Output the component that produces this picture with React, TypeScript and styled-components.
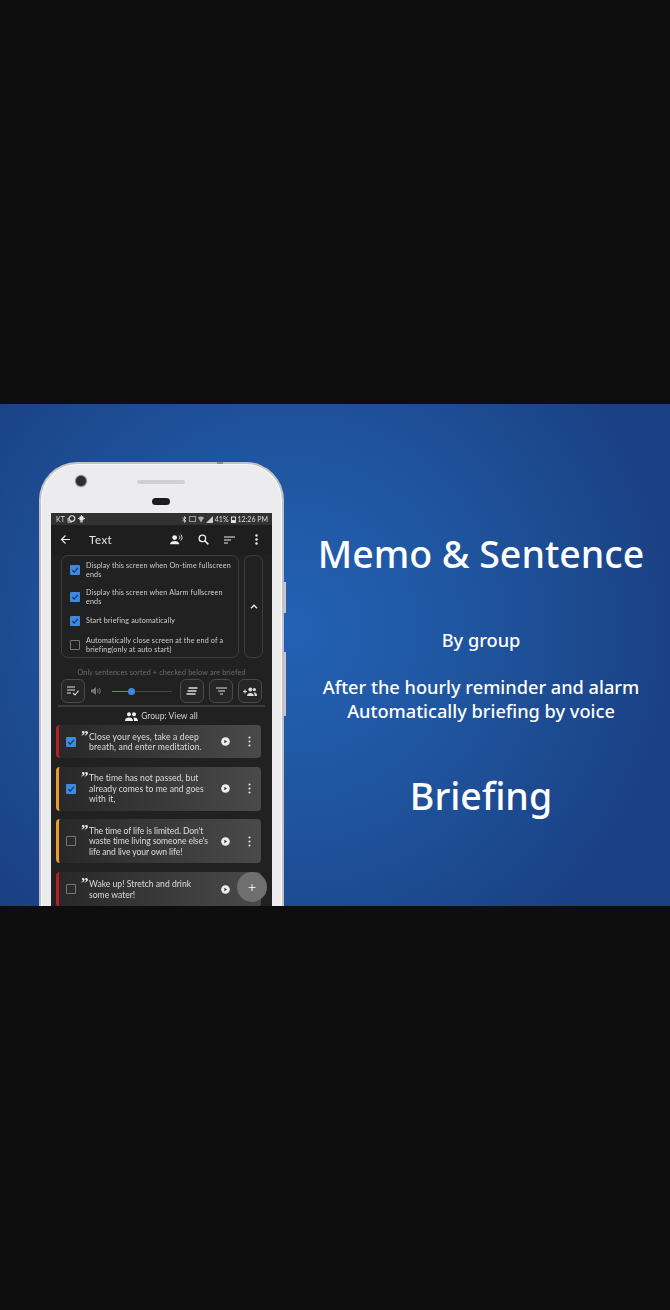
import styled, { createGlobalStyle } from "styled-components";

const GlobalStyle = createGlobalStyle`
  html, body {
    margin: 0;
    padding: 0;
    background: #0e0e0e;
  }
`;

const sentences = [
  { id: 1, bar: "#b3201f", checked: true, tracking: 0.12, lines: ["Close your eyes, take a deep", "breath, and enter meditation."], height: 33 },
  { id: 2, bar: "#ef9a2e", checked: true, tracking: 0.05, lines: ["The time has not passed, but", "already comes to me and goes", "with it,"], height: 44 },
  { id: 3, bar: "#ef9a2e", checked: false, tracking: -0.1, lines: ["The time of life is limited. Don't", "waste time living someone else's", "life and live your own life!"], height: 44 },
  { id: 4, bar: "#b3201f", checked: false, tracking: 0, lines: ["Wake up! Stretch and drink", "some water!"], height: 35 },
];

const options = [
  { id: 1, checked: true, text: "Display this screen when On-time fullscreen ends" },
  { id: 2, checked: true, text: "Display this screen when Alarm fullscreen ends" },
  { id: 3, checked: true, text: "Start briefing automatically" },
  { id: 4, checked: false, text: "Automatically close screen at the end of a briefing(only at auto start)" },
];

const Check = ({ on }: { on: boolean }) => (
  <CheckBox $on={on}>
    {on && (
      <svg width="8" height="8" viewBox="0 0 10 10">
        <path d="M1.5 5.2 4 7.6 8.6 2.4" fill="none" stroke="#16365c" strokeWidth="1.6" />
      </svg>
    )}
  </CheckBox>
);

const App = () => {
  return (
    <Page>
      <GlobalStyle />
      <Banner>
        <Phone>
          <TopMark />
          <SideKey $top={118} $height={31} />
          <SideKey $top={188} $height={64} />
          <Bezel>
            <Camera />
            <Speaker />
            <Sensor />
          </Bezel>
          <Screen>
            <StatusBar>
              <span>KT</span>
              <svg width="9" height="8" viewBox="0 0 9 8">
                <circle cx="5" cy="3.6" r="2.800" fill="none" stroke="#ddd" strokeWidth="1.1" />
                <path d="M.5 7h4.500M1 3v3" stroke="#ddd" />
              </svg>
              <svg width="7" height="8" viewBox="0 0 7 8">
                <circle cx="3.500" cy="3.500" r="2.400" fill="#e4e4e4" />
                <path d="M2 6.800h3M3.500 0v1M0 3.500h1M6 3.500h1" stroke="#e4e4e4" />
              </svg>
              <StatusRight>
                <svg width="5" height="7" viewBox="0 0 5 7">
                  <path d="M.5 2 4 5 2.400 6.500V.5L4 2 .5 5" fill="none" stroke="#ddd" strokeWidth=".8" />
                </svg>
                <svg width="7" height="6" viewBox="0 0 7 6">
                  <rect x=".5" y=".5" width="6" height="5" fill="none" stroke="#999" />
                </svg>
                <svg width="6" height="7" viewBox="0 0 6 7">
                  <path d="M0 1.500C2 0 4 0 6 1.500L3 6.500Z" fill="#aaa" />
                </svg>
                <svg width="7" height="7" viewBox="0 0 7 7">
                  <path d="M0 7 7 0V7Z" fill="#ccc" />
                </svg>
                <span>41%</span>
                <svg width="5" height="7" viewBox="0 0 5 7">
                  <rect x=".5" y="1" width="4" height="5.500" fill="none" stroke="#ddd" />
                  <rect x="1" y="4" width="3" height="2" fill="#ddd" />
                </svg>
                <span>12:26 PM</span>
              </StatusRight>
            </StatusBar>
            <AppBar>
              <svg width="11" height="11" viewBox="0 0 12 12">
                <path d="M11 6H2M6 1.600 1.600 6 6 10.400" fill="none" stroke="#eee" strokeWidth="1.300" />
              </svg>
              <AppTitle>Text</AppTitle>
              <AppActions>
                <svg width="13" height="11" viewBox="0 0 14 11">
                  <circle cx="5" cy="3.400" r="2.600" fill="#eee" />
                  <path d="M0 10.600c0-2.400 2.400-3.600 5-3.600s5 1.200 5 3.600Z" fill="#eee" />
                  <path d="M9.800 1.400c1 1 1 2.800 0 3.800M11.600 .2c1.800 1.800 1.800 4.600 0 6.400" fill="none" stroke="#eee" />
                </svg>
                <svg width="11" height="11" viewBox="0 0 11 11">
                  <circle cx="4.400" cy="4.400" r="3.200" fill="none" stroke="#eee" strokeWidth="1.300" />
                  <path d="M6.800 6.800 10.400 10.400" stroke="#eee" strokeWidth="1.500" />
                </svg>
                <svg width="11" height="8" viewBox="0 0 11 8">
                  <path d="M0 1h11M0 4h7M0 7h4" stroke="#eee" strokeWidth="1.100" />
                </svg>
                <DotsIcon width="3" height="11" viewBox="0 0 3 11">
                  <circle cx="1.500" cy="1.500" r="1.200" fill="#eee" />
                  <circle cx="1.500" cy="5.500" r="1.200" fill="#eee" />
                  <circle cx="1.500" cy="9.500" r="1.200" fill="#eee" />
                </DotsIcon>
              </AppActions>
            </AppBar>
            <OptionsRow>
              <OptionsPanel>
                {options.map((o) => (
                  <OptionRow key={o.id}>
                    <Check on={o.checked} />
                    <OptionText>{o.text}</OptionText>
                  </OptionRow>
                ))}
              </OptionsPanel>
              <CollapsePanel>
                <svg width="8" height="5" viewBox="0 0 8 5">
                  <path d="M1 4.200 4 1.200 7 4.200" fill="none" stroke="#eee" strokeWidth="1.300" />
                </svg>
              </CollapsePanel>
            </OptionsRow>
            <Hint>Only sentences sorted + checked below are briefed</Hint>
            <ToolRow>
              <ToolButton>
                <svg width="12" height="10" viewBox="0 0 12 10">
                  <path d="M0 1h8M0 4h8M0 7h4" stroke="#ddd" strokeWidth="1.100" />
                  <path d="M6 7 8 9 11.600 4.600" fill="none" stroke="#ddd" strokeWidth="1.100" />
                </svg>
              </ToolButton>
              <VolumeIcon width="10" height="10" viewBox="0 0 10 10">
                <path d="M0 3.400h2L5 1v8L2 6.600H0Z" fill="#777" />
                <path d="M6.400 3c.9 1 .9 3 0 4M8 1.800c1.600 1.800 1.600 4.600 0 6.400" fill="none" stroke="#777" />
              </VolumeIcon>
              <Slider>
                <SliderFill />
                <SliderKnob />
              </Slider>
              <ToolButton>
                <svg width="12" height="8" viewBox="0 0 12 8">
                  <path d="M2.500 1H11.500M1.500 4H10.500M.5 7H9.500" stroke="#ddd" strokeWidth="1.300" />
                </svg>
              </ToolButton>
              <ToolButton>
                <svg width="11" height="8" viewBox="0 0 11 8">
                  <path d="M0 1h11M2 4h7M4 7h3" stroke="#ddd" strokeWidth="1.100" />
                </svg>
              </ToolButton>
              <ToolButton>
                <svg width="14" height="9" viewBox="0 0 14 9">
                  <path d="M0 4.500h4M2 2.500v4" stroke="#ddd" strokeWidth="1.100" />
                  <circle cx="7.400" cy="2.400" r="2" fill="#ddd" />
                  <circle cx="11.400" cy="2.600" r="1.600" fill="#ddd" />
                  <path d="M4 9c0-2 1.600-3 3.400-3s3.400 1 3.400 3ZM11.400 5.400c1.400 0 2.600.8 2.600 3.600h-2.400c0-1.600-.4-2.800-1-3.400Z" fill="#ddd" />
                </svg>
              </ToolButton>
            </ToolRow>
            <Divider />
            <GroupRow>
              <svg width="13" height="9" viewBox="0 0 13 9">
                <circle cx="4" cy="2.200" r="2" fill="#eee" />
                <circle cx="9" cy="2.200" r="2" fill="#eee" />
                <path d="M0 9c0-2.400 2-3.400 4-3.400S8 6.600 8 9ZM8.600 5.600c2.200-.2 4.400.8 4.400 3.400H9c0-1.400-.2-2.400-.4-3.400Z" fill="#eee" />
              </svg>
              Group: View all
            </GroupRow>
            <CardList>
              {sentences.map((s) => (
                <Card key={s.id} $bar={s.bar} $height={s.height}>
                  <Check on={s.checked} />
                  <CardBody>
                    <QuoteMark>”</QuoteMark>
                    <CardText $tracking={s.tracking}>
                      {s.lines.map((line) => (
                        <div key={line}>{line}</div>
                      ))}
                    </CardText>
                  </CardBody>
                  <PlayIcon width="9" height="9" viewBox="0 0 9 9">
                    <circle cx="4.500" cy="4.500" r="4.300" fill="#eee" />
                    <path d="M3.400 2.700 6 4.500 3.400 6.300Z" fill="#333" />
                  </PlayIcon>
                  <MoreIcon width="3" height="11" viewBox="0 0 3 11">
                    <circle cx="1.500" cy="1.500" r="1.100" fill="#ddd" />
                    <circle cx="1.500" cy="5.500" r="1.100" fill="#ddd" />
                    <circle cx="1.500" cy="9.500" r="1.100" fill="#ddd" />
                  </MoreIcon>
                </Card>
              ))}
            </CardList>
            <Fab>+</Fab>
          </Screen>
        </Phone>
        <Copy>
          <Headline>Memo &amp; Sentence</Headline>
          <Caption $top={50}>By group</Caption>
          <Caption $top={23}>
            After the hourly reminder and alarm
            <br />
            Automatically briefing by voice
          </Caption>
          <Headline $top={49}>Briefing</Headline>
        </Copy>
      </Banner>
    </Page>
  );
};
export default App;

const Page = styled.div`
  width: 670px;
  height: 1310px;
  padding-top: 404px;
  box-sizing: border-box;
  background: #0e0e0e;
  overflow: hidden;
`;
const Banner = styled.div`
  height: 502px;
  display: flex;
  overflow: hidden;
  background: radial-gradient(ellipse 400px 400px at 290px 225px, #2361b5 0%, #1f559f 45%, #1a3f83 100%);
`;
const Phone = styled.div`
  width: 245px;
  height: 520px;
  margin: 58px 0 0 39px;
  flex-shrink: 0;
  box-sizing: border-box;
  padding: 0 10px;
  background: #ececee;
  border: 2px solid #c4c1c6;
  border-bottom: 0;
  border-radius: 38px 38px 0 0;
  box-shadow: inset 0 0 0 1px #f8f8f8;
  position: relative;
`;
const TopMark = styled.div`
  position: absolute;
  left: 176px;
  top: -2px;
  width: 6px;
  height: 2px;
  background: #8d8b8f;
`;
const SideKey = styled.div<{ $top: number; $height: number }>`
  position: absolute;
  right: -4px;
  top: ${(p) => p.$top}px;
  width: 2px;
  height: ${(p) => p.$height}px;
  background: #c9c6ca;
`;
const Bezel = styled.div`
  height: 49px;
  position: relative;
`;
const Camera = styled.div`
  position: absolute;
  left: 25px;
  top: 12px;
  width: 10px;
  height: 10px;
  border-radius: 50%;
  background: #2e2e30;
  box-shadow: 0 0 1px 1px #77777a;
`;
const Speaker = styled.div`
  position: absolute;
  left: 86px;
  top: 16px;
  width: 48px;
  height: 4px;
  border-radius: 2px;
  background: #cfcfd2;
`;
const Sensor = styled.div`
  position: absolute;
  left: 101px;
  top: 34px;
  width: 18px;
  height: 7px;
  border-radius: 4px;
  background: #1c1c1e;
`;
const Screen = styled.div`
  width: 221px;
  height: 393px;
  background: #212121;
  position: relative;
  overflow: hidden;
  font-family: Lato, "Noto Sans", sans-serif;
  color: #d8d8d8;
  filter: blur(0.3px);
`;
const StatusBar = styled.div`
  height: 12px;
  padding: 0 4px 0 5px;
  display: flex;
  align-items: center;
  gap: 2px;
  background: #323232;
  font-size: 7px;
  color: #ddd;
`;
const StatusRight = styled.div`
  margin-left: auto;
  display: flex;
  align-items: center;
  gap: 2px;
`;
const AppBar = styled.div`
  height: 29px;
  padding: 0 14px 1px 9px;
  display: flex;
  align-items: center;
  background: #1e1e1e;
`;
const AppTitle = styled.div`
  margin-left: 18px;
  font-size: 11.5px;
  letter-spacing: 0.5px;
  color: #e4e4e4;
`;
const AppActions = styled.div`
  margin-left: auto;
  display: flex;
  align-items: center;
  gap: 15px;
`;
const DotsIcon = styled.svg`
  margin-left: 5px;
`;
const OptionsRow = styled.div`
  margin: 0 9px 0 10px;
  display: flex;
  gap: 5px;
`;
const OptionsPanel = styled.div`
  width: 178px;
  height: 103px;
  box-sizing: border-box;
  padding: 4.5px 4px 0 8px;
  border: 1px solid #3e3e3e;
  border-radius: 7px;
  display: flex;
  flex-direction: column;
  gap: 6px;
`;
const OptionRow = styled.div`
  display: flex;
  align-items: center;
  gap: 6px;
  height: 18px;
  &:nth-child(2) {
    margin-top: 3px;
  }
`;
const CheckBox = styled.div<{ $on: boolean }>`
  width: 10px;
  height: 10px;
  flex-shrink: 0;
  box-sizing: border-box;
  border-radius: 1px;
  display: flex;
  align-items: center;
  justify-content: center;
  background: ${(p) => (p.$on ? "#3f8ae0" : "transparent")};
  border: ${(p) => (p.$on ? "0" : "1.5px solid #777")};
`;
const OptionText = styled.div`
  width: 148px;
  font-size: 7.2px;
  line-height: 9px;
  letter-spacing: 0.15px;
  color: #cfcfcf;
`;
const CollapsePanel = styled.div`
  width: 19px;
  height: 103px;
  box-sizing: border-box;
  border: 1px solid #3e3e3e;
  border-radius: 7px;
  display: flex;
  align-items: center;
  justify-content: center;
`;
const Hint = styled.div`
  margin-top: 10px;
  height: 9px;
  line-height: 9px;
  text-align: center;
  font-size: 7.2px;
  letter-spacing: 0.15px;
  color: #6c6c6c;
`;
const ToolRow = styled.div`
  margin: 2px 10px 0;
  display: flex;
  align-items: center;
`;
const ToolButton = styled.div`
  width: 24px;
  height: 24px;
  box-sizing: border-box;
  border: 1px solid #4a4a4a;
  border-radius: 6px;
  display: flex;
  align-items: center;
  justify-content: center;
  margin-right: 5px;
  background: #262626;
  &:first-child {
    margin-right: 6px;
  }
  &:last-child {
    margin-right: 0;
  }
`;
const VolumeIcon = styled.svg`
  margin-right: 11px;
`;
const Slider = styled.div`
  width: 60px;
  height: 1px;
  margin-right: 8px;
  background: #444;
  position: relative;
`;
const SliderFill = styled.div`
  width: 20px;
  height: 1px;
  background: #3f8ae0;
`;
const SliderKnob = styled.div`
  position: absolute;
  left: 16px;
  top: -3px;
  width: 7px;
  height: 7px;
  border-radius: 50%;
  background: #3f8ae0;
`;
const Divider = styled.div`
  margin: 2px 7px 0;
  height: 2px;
  background: #3c3c3c;
`;
const GroupRow = styled.div`
  height: 18px;
  display: flex;
  align-items: center;
  justify-content: center;
  gap: 3px;
  font-size: 8.5px;
  color: #cfcfcf;
`;
const CardList = styled.div`
  margin: 0 11px 0 5px;
  display: flex;
  flex-direction: column;
  gap: 8.5px;
`;
const Card = styled.div<{ $bar: string; $height: number }>`
  height: ${(p) => p.$height}px;
  flex-shrink: 0;
  box-sizing: border-box;
  padding: 0 10px 0 7px;
  display: flex;
  align-items: center;
  border-left: 3px solid ${(p) => p.$bar};
  border-radius: 4px;
  background: linear-gradient(90deg, #282828 0%, #4a4a4a 100%);
`;
const CardBody = styled.div`
  margin: 1px 0 0 5px;
  display: flex;
  align-items: flex-start;
`;
const QuoteMark = styled.span`
  width: 8px;
  height: 8px;
  flex-shrink: 0;
  margin-top: -2px;
  font-family: "Liberation Serif", serif;
  font-weight: 700;
  font-size: 15px;
  line-height: 13px;
  color: #eee;
`;
const CardText = styled.div<{ $tracking: number }>`
  font-size: 8.6px;
  line-height: 10.4px;
  letter-spacing: ${(p) => p.$tracking}px;
  white-space: nowrap;
  color: #dcdcdc;
`;
const PlayIcon = styled.svg`
  margin-left: auto;
`;
const MoreIcon = styled.svg`
  margin-left: 18px;
`;
const Fab = styled.div`
  position: absolute;
  left: 186px;
  top: 359px;
  width: 30px;
  height: 30px;
  border-radius: 50%;
  background: #6f6f6f;
  color: #e8e8e8;
  font-size: 14px;
  line-height: 29px;
  text-align: center;
`;
const Copy = styled.div`
  flex: 1;
  padding: 126px 0 0 8px;
  text-align: center;
  color: #fff;
  font-family: "Noto Sans", "Open Sans", sans-serif;
`;
const Headline = styled.div<{ $top?: number }>`
  margin-top: ${(p) => p.$top ?? 0}px;
  font-size: 37.5px;
  font-weight: 500;
  line-height: 48px;
`;
const Caption = styled.div<{ $top: number }>`
  margin-top: ${(p) => p.$top}px;
  font-size: 18.2px;
  font-weight: 500;
  line-height: 24px;
`;
